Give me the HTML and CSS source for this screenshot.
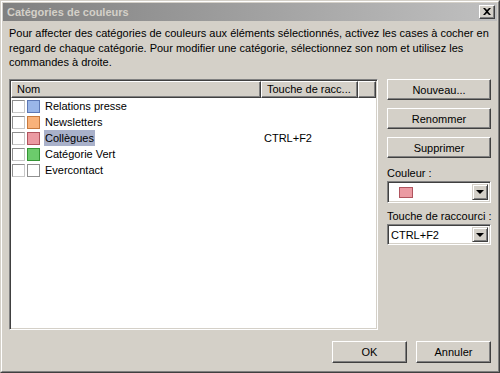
FILE: index.html
```html
<!DOCTYPE html>
<html lang="fr">
<head>
    <meta charset="UTF-8">
    <title>Catégories de couleurs</title>
    <link rel="stylesheet" href="styles.css">
</head>
<body>
    <div class="window">
        <div class="window-inner">
            <div class="titlebar">
                <span class="title">Catégories de couleurs</span>
                <span class="close-btn">
                    <svg width="8" height="7" viewBox="0 0 8 7">
                        <path d="M0 0 L2 0 L4 2 L6 0 L8 0 L5 3.5 L8 7 L6 7 L4 5 L2 7 L0 7 L3 3.5 Z" fill="#000"/>
                    </svg>
                </span>
            </div>

            <div class="content">
                <p class="intro">Pour affecter des catégories de couleurs aux éléments sélectionnés, activez les cases à cocher en regard de chaque catégorie. Pour modifier une catégorie, sélectionnez son nom et utilisez les commandes à droite.</p>

                <div class="main">
                    <div class="list">
                        <div class="list-header">
                            <div class="col col-name">Nom</div>
                            <div class="col col-key">Touche de racc...</div>
                            <div class="col col-fill"></div>
                        </div>
                        <div class="rows">
                            <div class="row">
                                <div class="cell-name">
                                    <span class="check"></span>
                                    <span class="swatch blue"></span>
                                    <span class="name">Relations presse</span>
                                </div>
                                <div class="cell-key"></div>
                            </div>
                            <div class="row">
                                <div class="cell-name">
                                    <span class="check"></span>
                                    <span class="swatch orange"></span>
                                    <span class="name">Newsletters</span>
                                </div>
                                <div class="cell-key"></div>
                            </div>
                            <div class="row">
                                <div class="cell-name">
                                    <span class="check"></span>
                                    <span class="swatch red"></span>
                                    <span class="name selected">Collègues</span>
                                </div>
                                <div class="cell-key">CTRL+F2</div>
                            </div>
                            <div class="row">
                                <div class="cell-name">
                                    <span class="check"></span>
                                    <span class="swatch green"></span>
                                    <span class="name">Catégorie Vert</span>
                                </div>
                                <div class="cell-key"></div>
                            </div>
                            <div class="row">
                                <div class="cell-name">
                                    <span class="check"></span>
                                    <span class="swatch none"></span>
                                    <span class="name">Evercontact</span>
                                </div>
                                <div class="cell-key"></div>
                            </div>
                        </div>
                    </div>

                    <div class="side">
                        <button class="btn">Nouveau...</button>
                        <button class="btn">Renommer</button>
                        <button class="btn">Supprimer</button>
                        <label class="field-label">Couleur :</label>
                        <div class="combo combo-color">
                            <span class="combo-value"><span class="swatch-sm"></span></span>
                            <span class="drop"><span class="arrow"></span></span>
                        </div>
                        <label class="field-label">Touche de raccourci :</label>
                        <div class="combo combo-key">
                            <span class="combo-value">CTRL+F2</span>
                            <span class="drop"><span class="arrow"></span></span>
                        </div>
                    </div>
                </div>

                <div class="footer">
                    <button class="btn btn-footer">OK</button>
                    <button class="btn btn-footer">Annuler</button>
                </div>
            </div>
        </div>
    </div>
</body>
</html>
```

FILE: styles.css
```css
body {
    margin: 0;
    font-family: "Liberation Sans", Arial, sans-serif;
    font-size: 11px;
    color: #000;
    background-color: #d4d0c8;
}
.window {
    width: 500px;
    height: 373px;
    box-sizing: border-box;
    background-color: #d4d0c8;
    border: 1px solid;
    border-color: #d4d0c8 #404040 #404040 #d4d0c8;
}
.window-inner {
    height: 100%;
    box-sizing: border-box;
    border: 1px solid;
    border-color: #fff #808080 #808080 #fff;
    padding: 1px;
    display: flex;
    flex-direction: column;
}
.titlebar {
    height: 18px;
    flex-shrink: 0;
    background: linear-gradient(to right, #808080, #c0c0c0);
    display: flex;
    align-items: center;
    justify-content: space-between;
    padding: 0 2px 0 4px;
}
.title {
    color: #d4d0c8;
    font-weight: bold;
    font-size: 11px;
}
.close-btn {
    width: 16px;
    height: 14px;
    box-sizing: border-box;
    background-color: #d4d0c8;
    border: 1px solid;
    border-color: #fff #404040 #404040 #fff;
    box-shadow: inset -1px -1px #808080;
    display: flex;
    align-items: center;
    justify-content: center;
    padding-bottom: 1px;
}
.content {
    flex: 1;
    padding: 0 6px 8px 6px;
    display: flex;
    flex-direction: column;
}
.intro {
    margin: 5px 0 0 0;
    line-height: 14.5px;
    height: 44px;
}
.main {
    margin-top: 9px;
    height: 251px;
    display: flex;
    gap: 9px;
}
.list {
    width: 370px;
    box-sizing: border-box;
    border: 1px solid;
    border-color: #808080 #fff #fff #808080;
    box-shadow: inset 1px 1px #404040, inset -1px -1px #d4d0c8;
    background-color: #fff;
    padding: 1px;
}
.list-header {
    display: flex;
    height: 17px;
    background-color: #d4d0c8;
}
.col {
    box-sizing: border-box;
    border: 1px solid;
    border-color: #fff #404040 #404040 #fff;
    box-shadow: inset -1px -1px #808080;
    padding: 0 0 0 5px;
    line-height: 14px;
    white-space: nowrap;
    overflow: hidden;
}
.col-name {
    width: 250px;
}
.col-key {
    width: 97px;
}
.col-fill {
    flex: 1;
}
.row {
    height: 16px;
    display: flex;
    align-items: center;
}
.cell-name {
    width: 250px;
    display: flex;
    align-items: center;
    padding-left: 1px;
    box-sizing: border-box;
}
.cell-key {
    padding-left: 3px;
    white-space: nowrap;
}
.check {
    width: 13px;
    height: 13px;
    box-sizing: border-box;
    border: 1px solid;
    border-color: #8e8e8e #c8c8c8 #c8c8c8 #8e8e8e;
    background-color: #fff;
}
.swatch {
    width: 13px;
    height: 13px;
    box-sizing: border-box;
    margin-left: 2px;
    border: 1px solid;
}
.swatch.blue {
    background-color: #9ab6e8;
    border-color: #5d78b4;
}
.swatch.orange {
    background-color: #f9b27a;
    border-color: #c77a3e;
}
.swatch.red {
    background-color: #eb9aa2;
    border-color: #b0545e;
}
.swatch.green {
    background-color: #6ccb6c;
    border-color: #349434;
}
.swatch.none {
    background-color: #fff;
    border-color: #909090;
}
.name {
    margin-left: 4px;
    padding: 0 1px;
    line-height: 16px;
}
.name.selected {
    background-color: #a9b1ca;
}
.side {
    width: 104px;
    display: flex;
    flex-direction: column;
}
.btn {
    font-family: "Liberation Sans", Arial, sans-serif;
    font-size: 11px;
    color: #000;
    background-color: #d4d0c8;
    box-sizing: border-box;
    border: 1px solid;
    border-color: #fff #404040 #404040 #fff;
    box-shadow: inset -1px -1px #808080;
    padding: 0;
    height: 21px;
    width: 104px;
    margin-bottom: 8px;
}
.field-label {
    line-height: 14px;
    margin-bottom: 1px;
    white-space: nowrap;
}
.combo {
    display: flex;
    box-sizing: border-box;
    width: 104px;
    border: 1px solid;
    border-color: #808080 #fff #fff #808080;
    box-shadow: inset 1px 1px #404040, inset -1px -1px #d4d0c8;
    background-color: #fff;
    padding: 2px;
}
.combo-color {
    height: 22px;
    margin-bottom: 6px;
}
.combo-key {
    height: 21px;
}
.combo-value {
    flex: 1;
    display: flex;
    align-items: center;
    padding-left: 1px;
}
.swatch-sm {
    width: 14px;
    height: 11px;
    box-sizing: border-box;
    margin-left: 8px;
    background-color: #eb9aa2;
    border: 1px solid #b0545e;
}
.drop {
    width: 16px;
    box-sizing: border-box;
    background-color: #d4d0c8;
    border: 1px solid;
    border-color: #d4d0c8 #404040 #404040 #d4d0c8;
    box-shadow: inset 1px 1px #fff, inset -1px -1px #808080;
    display: flex;
    align-items: center;
    justify-content: center;
}
.arrow {
    width: 0;
    height: 0;
    border-left: 4px solid transparent;
    border-right: 4px solid transparent;
    border-top: 4px solid #000;
}
.footer {
    margin-top: 11px;
    display: flex;
    justify-content: flex-end;
    gap: 9px;
}
.btn-footer {
    width: 75px;
    height: 22px;
    margin-bottom: 0;
}
```
